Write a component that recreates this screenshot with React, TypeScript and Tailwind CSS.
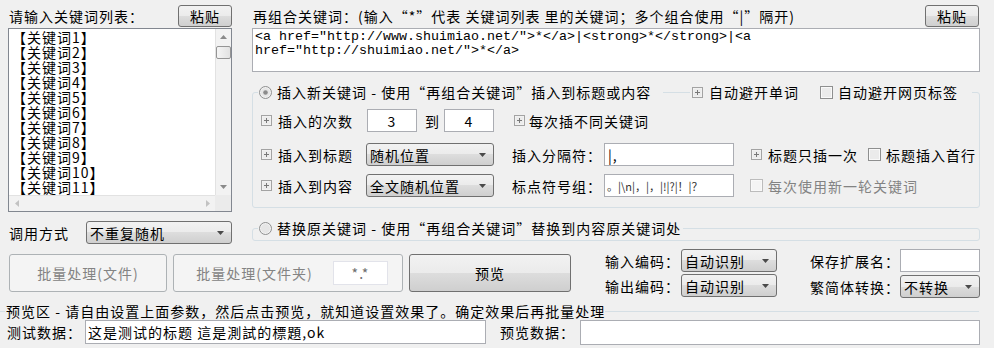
import type { ReactNode } from "react";

const face =
  "bg-[linear-gradient(#f2f2f2,#ebebeb_50%,#dddddd_50%,#cfcfcf)] border border-[#707070] rounded-[3px]";

function Btn({ className = "", children }: { className?: string; children: ReactNode }) {
  return <div className={`${face} flex items-center justify-center shrink-0 ${className}`}>{children}</div>;
}

function DisabledBtn({ className = "", children }: { className?: string; children: ReactNode }) {
  return (
    <div className={`bg-[#f4f4f4] border border-[#adb2b5] rounded-[3px] text-[#838383] flex items-center shrink-0 ${className}`}>
      {children}
    </div>
  );
}

function Combo({ className = "", children }: { className?: string; children: ReactNode }) {
  return (
    <div className={`${face} rounded-[2px] flex items-center justify-between pl-[3px] pr-[7px] shrink-0 ${className}`}>
      <span>{children}</span>
      <svg width="7" height="4" viewBox="0 0 7 4">
        <path d="M0 0h7L3.5 4z" fill="#4a4a4a" />
      </svg>
    </div>
  );
}

function TextBox({ className = "", children }: { className?: string; children?: ReactNode }) {
  return (
    <div className={`bg-white border border-[#abadb3] flex items-center shrink-0 ${className}`}>{children}</div>
  );
}

function PlusBox({ className = "" }: { className?: string }) {
  return (
    <svg width="11" height="11" viewBox="0 0 11 11" className={`shrink-0 ${className}`}>
      <rect x="0.5" y="0.5" width="10" height="10" fill="#f6f6f6" stroke="#a3a3a3" />
      <rect x="1.5" y="1.5" width="8" height="8" fill="#ececec" />
      <path d="M3 5.5h5M5.5 3v5" stroke="#787878" />
    </svg>
  );
}

function Check({ className = "", disabled = false }: { className?: string; disabled?: boolean }) {
  return (
    <svg width="13" height="13" viewBox="0 0 13 13" className={`shrink-0 ${className}`}>
      <rect x="0.5" y="0.5" width="12" height="12" fill="#f4f4f4" stroke={disabled ? "#bcbcbc" : "#8e8f8f"} />
      <rect x="1.5" y="1.5" width="10" height="10" fill={disabled ? "#f4f4f4" : "#ebebeb"} stroke="#f9f9f9" />
    </svg>
  );
}

function Radio({ on = false, className = "" }: { on?: boolean; className?: string }) {
  return (
    <svg width="13" height="13" viewBox="0 0 13 13" className={`shrink-0 ${className}`}>
      <circle cx="6.5" cy="6.5" r="6" fill="#f2f2f2" stroke="#8e8f8f" />
      <circle cx="6.5" cy="6.5" r="4.5" fill="#e6e6e6" />
      {on && <circle cx="6.5" cy="6.5" r="2.3" fill="#8c8c8c" />}
    </svg>
  );
}

const keywords = Array.from({ length: 11 }, (_, i) => `【关键词${i + 1}】`);

export default function App() {
  return (
    <div className="w-[994px] h-[348px] overflow-hidden bg-[#f0f0f0] text-black text-[14px] leading-[16px] tracking-[1px] font-['Noto_Sans_CJK_SC','Noto_Sans',sans-serif]">
      <div className="flex items-start">
        {/* keyword list column */}
        <div className="ml-[8px] w-[224px] pt-[5px]">
          <div className="flex items-center justify-between h-[22px]">
            <span className="ml-[1px]">请输入关键词列表：</span>
            <Btn className="w-[54px] h-[22px]">粘贴</Btn>
          </div>
          <div className="mt-[1px] h-[184px] border border-[#828790] bg-white flex flex-col">
            <div className="flex flex-1 min-h-0">
              <div className="flex-1 pl-[3px] pt-[1px] leading-[15px]">
                {keywords.map((k) => (
                  <div key={k}>{k}</div>
                ))}
              </div>
              <div className="w-[16px] bg-[#f2f2f2] border-l border-[#e2e2e2] flex flex-col items-center">
                <svg width="7" height="4" viewBox="0 0 7 4" className="mt-[6px]">
                  <path d="M0 4h7L3.5 0z" fill="#8a8a8a" />
                </svg>
                <div className="mt-[7px] w-[15px] h-[13px] border border-[#959595] rounded-[2px] bg-[linear-gradient(90deg,#f5f5f5,#e2e2e2)]" />
                <div className="flex-1" />
                <svg width="7" height="4" viewBox="0 0 7 4" className="mb-[6px]">
                  <path d="M0 0h7L3.5 4z" fill="#8a8a8a" />
                </svg>
              </div>
            </div>
            <div className="flex h-[16px]">
              <div className="flex-1 bg-[#f2f2f2] border-t border-[#e2e2e2] flex items-center justify-between pl-[6px] pr-[5px]">
                <svg width="4" height="7" viewBox="0 0 4 7">
                  <path d="M4 0v7L0 3.5z" fill="#c2c2c2" />
                </svg>
                <svg width="4" height="7" viewBox="0 0 4 7">
                  <path d="M0 0v7L4 3.5z" fill="#c2c2c2" />
                </svg>
              </div>
              <div className="w-[16px] bg-[#ebebeb]" />
            </div>
          </div>
          <div className="mt-[9px] flex items-center h-[23px]">
            <span className="ml-[1px] w-[77px]">调用方式</span>
            <Combo className="w-[146px] h-[23px]">不重复随机</Combo>
          </div>
        </div>

        {/* combination column */}
        <div className="ml-[20px] w-[728px] pt-[5px]">
          <div className="flex items-center justify-between h-[22px]">
            <span className="ml-[1px]">再组合关键词：(输入“*”代表 关键词列表 里的关键词；多个组合使用“|”隔开)</span>
            <Btn className="w-[54px] h-[22px] mr-[1px]">粘贴</Btn>
          </div>
          <div className="mt-[1px] h-[44px] border border-[#abadb3] bg-white pl-[2px] pt-[1px] font-['Liberation_Mono',monospace] text-[13.33px] leading-[14px] tracking-normal whitespace-pre">
            {'<a href="http://www.shuimiao.net/">*</a>|<strong>*</strong>|<a\nhref="http://shuimiao.net/">*</a>'}
          </div>

          <fieldset className="mt-[12px] border border-[#d5dfe5] rounded-[3px] pt-[9px] pb-[10px]">
            <legend className="ml-[5px]">
              <span className="flex items-center w-[714px] h-[16px]">
                <Radio on className="ml-[1px]" />
                <span className="ml-[5px] w-[386px] whitespace-nowrap">插入新关键词 - 使用“再组合关键词”插入到标题或内容</span>
                <span className="w-[27px] h-px bg-[#d5dfe5]" />
                <PlusBox className="ml-[2px]" />
                <span className="ml-[6px] w-[111px]">自动避开单词</span>
                <Check />
                <span className="ml-[5px]">自动避开网页标签</span>
              </span>
            </legend>

            <div className="pl-[8px]">
              <div className="flex items-center h-[23px]">
                <PlusBox />
                <span className="ml-[6px] w-[89px]">插入的次数</span>
                <TextBox className="w-[50px] h-[23px] justify-center">3</TextBox>
                <span className="ml-[8px] w-[19px]">到</span>
                <TextBox className="w-[50px] h-[23px] justify-center">4</TextBox>
                <PlusBox className="ml-[20px]" />
                <span className="ml-[4px]">每次插不同关键词</span>
              </div>

              <div className="mt-[11px] flex items-center h-[23px]">
                <PlusBox />
                <span className="ml-[6px] w-[88px]">插入到标题</span>
                <Combo className="w-[128px] h-[23px]">随机位置</Combo>
                <span className="ml-[18px] w-[92px]">插入分隔符：</span>
                <TextBox className="w-[130px] h-[23px] pl-[3px]">|,</TextBox>
                <PlusBox className="ml-[17px]" />
                <span className="ml-[6px] w-[100px]">标题只插一次</span>
                <Check />
                <span className="ml-[5px]">标题插入首行</span>
              </div>

              <div className="mt-[8px] flex items-center h-[23px]">
                <PlusBox />
                <span className="ml-[6px] w-[88px]">插入到内容</span>
                <Combo className="w-[128px] h-[23px]">全文随机位置</Combo>
                <span className="ml-[18px] w-[92px]">标点符号组：</span>
                <TextBox className="w-[130px] h-[23px] pl-[2px] text-[11px] tracking-normal text-[#333]">
                  。|\n|，|，|!|?|！|？
                </TextBox>
                <Check disabled className="ml-[16px]" />
                <span className="ml-[5px] text-[#838383]">每次使用新一轮关键词</span>
              </div>
            </div>
          </fieldset>

          <fieldset className="mt-[12px] border border-[#d5dfe5] rounded-[3px] pb-[4px]">
            <legend className="ml-[5px] pr-[2px]">
              <span className="flex items-center h-[16px]">
                <Radio className="ml-[1px]" />
                <span className="ml-[5px]">替换原关键词 - 使用“再组合关键词”替换到内容原关键词处</span>
              </span>
            </legend>
          </fieldset>
        </div>
      </div>

      {/* batch / encoding row */}
      <div className="mt-[5px] flex items-start h-[50px]">
        <DisabledBtn className="ml-[9px] mt-[5px] w-[158px] h-[38px] justify-center">批量处理(文件)</DisabledBtn>
        <DisabledBtn className="ml-[6px] mt-[5px] w-[230px] h-[38px]">
          <span className="flex-1 text-center pl-[2px]">批量处理(文件夹)</span>
          <TextBox className="w-[55px] h-[24px] mr-[14px] justify-center text-[#6d6d6d] border-[#e2e3ea]">*.*</TextBox>
        </DisabledBtn>
        <Btn className="ml-[6px] mt-[5px] w-[162px] h-[38px]">预览</Btn>

        <div className="ml-[34px] flex flex-col">
          <div className="flex items-center h-[23px]">
            <span className="w-[76px]">输入编码：</span>
            <Combo className="w-[96px] h-[23px]">自动识别</Combo>
          </div>
          <div className="mt-[2px] flex items-center h-[23px]">
            <span className="w-[76px]">输出编码：</span>
            <Combo className="w-[96px] h-[23px]">自动识别</Combo>
          </div>
        </div>

        <div className="ml-[33px] flex flex-col">
          <div className="flex items-center h-[23px]">
            <span className="w-[90px]">保存扩展名：</span>
            <TextBox className="w-[80px] h-[23px]" />
          </div>
          <div className="mt-[3px] flex items-center h-[23px]">
            <span className="w-[90px]">繁简体转换：</span>
            <Combo className="w-[80px] h-[23px]">不转换</Combo>
          </div>
        </div>
      </div>

      {/* preview area */}
      <div className="mt-[4px] w-[979px] flex items-center h-[16px]">
        <span className="w-[5px] h-px bg-[#d5dfe5]" />
        <span className="ml-[1px] whitespace-nowrap">预览区 - 请自由设置上面参数，然后点击预览，就知道设置效果了。确定效果后再批量处理</span>
        <span className="flex-1 h-px bg-[#d5dfe5]" />
      </div>
      <div className="mt-[1px] flex items-start">
        <span className="ml-[7px] w-[78px] h-[24px] flex items-center">测试数据：</span>
        <TextBox className="w-[401px] h-[24px] pl-[2px]">这是测试的标题 這是測試的標題,ok</TextBox>
        <span className="ml-[14px] w-[80px] h-[24px] flex items-center">预览数据：</span>
        <TextBox className="w-[400px] h-[25px]" />
      </div>
    </div>
  );
}
